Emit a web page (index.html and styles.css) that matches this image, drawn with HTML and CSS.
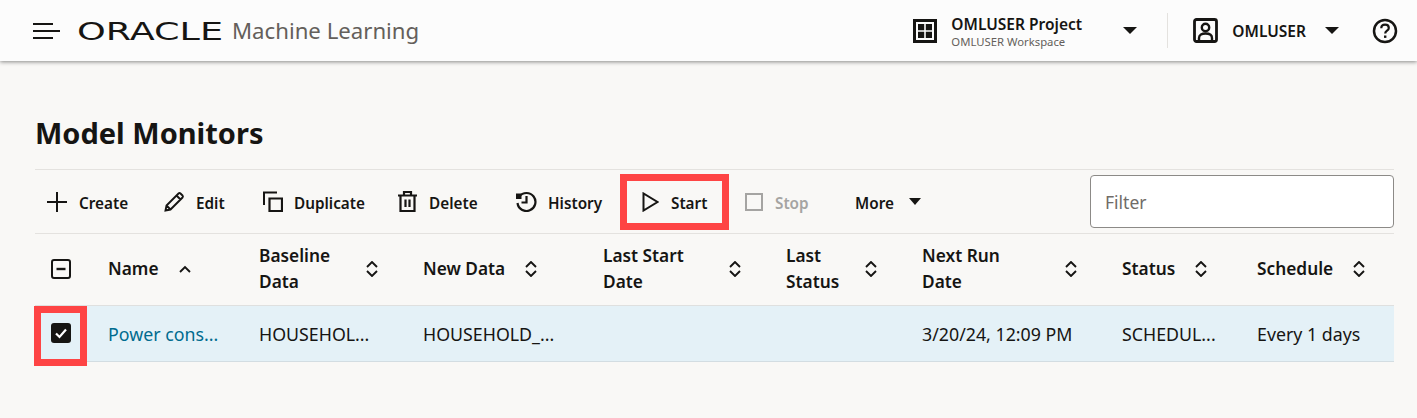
FILE: index.html
```html
<!DOCTYPE html>
<html>
<head>
    <title>Model Monitors</title>
    <link rel="stylesheet" href="styles.css">
</head>
<body>
    <header class="topbar">
        <svg class="ham" width="27" height="18" viewBox="0 0 27 18"><path d="M0 2h20M0 9h27M0 16h20" stroke="#161513" stroke-width="2.200" fill="none"/></svg>
        <svg class="logo" width="146" height="28" viewBox="0 0 146 28"><text x="0" y="22.500" textLength="146" lengthAdjust="spacingAndGlyphs" class="logo-text">ORACLE</text></svg>
        <span class="app-name">Machine Learning</span>
        <div class="spacer"></div>
        <div class="project">
            <svg class="ico" width="24" height="24" viewBox="0 0 24 24"><path d="M1.500 1.500h21v21h-21z" fill="none" stroke="#161513" stroke-width="3"/><path d="M5 5h6.200v6.200H5zM12.800 5H19v6.200h-6.200zM5 12.800h6.200V19H5zM12.800 12.800H19V19h-6.200z" fill="#161513"/></svg>
            <div class="project-text">
                <div class="project-name">OMLUSER Project</div>
                <div class="project-sub">OMLUSER Workspace</div>
            </div>
            <span class="caret caret-big"></span>
        </div>
        <div class="divider"></div>
        <div class="user">
            <svg class="ico" width="25" height="25" viewBox="0 0 25 25"><rect x="1.500" y="1.500" width="22" height="22" rx="2" fill="none" stroke="#161513" stroke-width="2.800"/><circle cx="12.500" cy="9.500" r="3.700" fill="none" stroke="#161513" stroke-width="2.400"/><path d="M6 23v-3c0-3 3-4.500 6.500-4.500s6.500 1.500 6.500 4.500v3" fill="none" stroke="#161513" stroke-width="2.400"/></svg>
            <span class="user-name">OMLUSER</span>
            <span class="caret caret-big"></span>
        </div>
        <svg class="help" width="26" height="26" viewBox="0 0 26 26"><circle cx="13" cy="13" r="11" fill="none" stroke="#161513" stroke-width="2.500"/><path d="M9.300 10.200c0-2.300 1.700-3.500 3.800-3.500 2.200 0 3.700 1.300 3.700 3.200 0 2.900-3.600 2.700-3.600 5.700" fill="none" stroke="#161513" stroke-width="2.200"/><rect x="12" y="17.500" width="2.400" height="2.400" fill="#161513"/></svg>
    </header>

    <main class="content">
        <h1 class="title">Model Monitors</h1>

        <div class="toolbar">
            <div class="btn btn-create">
                <svg width="20" height="20" viewBox="0 0 20 20"><path d="M10 0v20M0 10h20" stroke="#161513" stroke-width="2" fill="none"/></svg>
                <span>Create</span>
            </div>
            <div class="btn btn-edit">
                <svg width="21" height="21" viewBox="0 0 21 21"><path d="M1.500 19.500l1-5L14.500 2.500a1.500 1.500 0 0 1 2 0l2 2a1.500 1.500 0 0 1 0 2L6.500 18.500zM2.500 14.500l4 4M12.500 4.500l4 4" fill="none" stroke="#161513" stroke-width="1.900"/></svg>
                <span>Edit</span>
            </div>
            <div class="btn btn-dup">
                <svg width="21" height="21" viewBox="0 0 21 21"><path d="M2 14V1.500h13" fill="none" stroke="#161513" stroke-width="2"/><path d="M7.500 7.500h12.500v12.500H7.500z" fill="none" stroke="#161513" stroke-width="2.200"/></svg>
                <span>Duplicate</span>
            </div>
            <div class="btn btn-del">
                <svg width="19" height="21" viewBox="0 0 19 21"><path d="M0 4.500h19M6 4.500V1h7v3.500M2.500 4.500V20h14V4.500M7.500 8.500v7.500M11.500 8.500v7.500" fill="none" stroke="#161513" stroke-width="2.200"/></svg>
                <span>Delete</span>
            </div>
            <div class="btn btn-hist">
                <svg width="22" height="21" viewBox="0 0 22 21"><path d="M4.300 5.500A9 9 0 1 1 2.500 12" fill="none" stroke="#161513" stroke-width="2.200"/><path d="M1 2.500L6.500 2.500 6.500 8 1 8z" fill="#161513"/><path d="M11.500 5v6.500h-5" fill="none" stroke="#161513" stroke-width="2.200"/></svg>
                <span>History</span>
            </div>
            <div class="btn btn-start">
                <svg width="17" height="20" viewBox="0 0 17 20"><path d="M1.500 1.500v17L15.500 10z" fill="none" stroke="#161513" stroke-width="2"/></svg>
                <span>Start</span>
            </div>
            <div class="btn btn-stop">
                <svg width="18" height="18" viewBox="0 0 18 18"><rect x="1" y="1" width="16" height="16" fill="none" stroke="#a5a4a2" stroke-width="2"/></svg>
                <span>Stop</span>
            </div>
            <div class="btn btn-more">
                <span>More</span>
                <span class="caret"></span>
            </div>
            <div class="filter">Filter</div>
        </div>

        <table class="grid">
            <colgroup>
                <col class="c1"><col class="c2"><col class="c3"><col class="c4"><col class="c5"><col class="c6"><col class="c7"><col class="c8"><col class="c9">
            </colgroup>
            <thead>
                <tr>
                    <th class="check-cell">
                        <svg class="check-head" width="20" height="20" viewBox="0 0 20 20"><rect x="1" y="1" width="18" height="18" rx="2" fill="none" stroke="#161513" stroke-width="2"/><path d="M5.500 10h9" stroke="#161513" stroke-width="2.400"/></svg>
                    </th>
                    <th><div class="th-in"><span class="th-label">Name</span><svg class="sort-up" width="12" height="8" viewBox="0 0 12 8"><path d="M1 7l5-5 5 5" fill="none" stroke="#161513" stroke-width="1.900"/></svg></div></th>
                    <th><div class="th-in th-wrap"><span class="th-label">Baseline<br>Data</span><svg class="sort" width="12" height="16" viewBox="0 0 12 16"><path d="M1 6l5-5 5 5M1 10l5 5 5-5" fill="none" stroke="#161513" stroke-width="1.900"/></svg></div></th>
                    <th><div class="th-in"><span class="th-label">New Data</span><svg class="sort" width="12" height="16" viewBox="0 0 12 16"><path d="M1 6l5-5 5 5M1 10l5 5 5-5" fill="none" stroke="#161513" stroke-width="1.900"/></svg></div></th>
                    <th><div class="th-in th-wrap"><span class="th-label">Last Start<br>Date</span><svg class="sort" width="12" height="16" viewBox="0 0 12 16"><path d="M1 6l5-5 5 5M1 10l5 5 5-5" fill="none" stroke="#161513" stroke-width="1.900"/></svg></div></th>
                    <th><div class="th-in th-wrap"><span class="th-label">Last<br>Status</span><svg class="sort" width="12" height="16" viewBox="0 0 12 16"><path d="M1 6l5-5 5 5M1 10l5 5 5-5" fill="none" stroke="#161513" stroke-width="1.900"/></svg></div></th>
                    <th><div class="th-in th-wrap"><span class="th-label">Next Run<br>Date</span><svg class="sort" width="12" height="16" viewBox="0 0 12 16"><path d="M1 6l5-5 5 5M1 10l5 5 5-5" fill="none" stroke="#161513" stroke-width="1.900"/></svg></div></th>
                    <th><div class="th-in"><span class="th-label">Status</span><svg class="sort" width="12" height="16" viewBox="0 0 12 16"><path d="M1 6l5-5 5 5M1 10l5 5 5-5" fill="none" stroke="#161513" stroke-width="1.900"/></svg></div></th>
                    <th><div class="th-in"><span class="th-label">Schedule</span><svg class="sort" width="12" height="16" viewBox="0 0 12 16"><path d="M1 6l5-5 5 5M1 10l5 5 5-5" fill="none" stroke="#161513" stroke-width="1.900"/></svg></div></th>
                </tr>
            </thead>
            <tbody>
                <tr class="selected">
                    <td class="check-cell">
                        <svg class="check-row" width="20" height="20" viewBox="0 0 20 20"><rect width="20" height="20" rx="3" fill="#161513"/><path d="M5 10.500l3.500 3.500L15 6.500" fill="none" stroke="#fff" stroke-width="2.200"/></svg>
                        <div class="mark-check"></div>
                    </td>
                    <td><a class="link">Power cons...</a></td>
                    <td>HOUSEHOL...</td>
                    <td>HOUSEHOLD_...</td>
                    <td></td>
                    <td></td>
                    <td>3/20/24, 12:09 PM</td>
                    <td>SCHEDUL...</td>
                    <td>Every 1 days</td>
                </tr>
            </tbody>
        </table>
    </main>
</body>
</html>
```
FILE: styles.css
```css
* {
    box-sizing: border-box;
}

body {
    margin: 0;
    height: 418px;
    overflow: hidden;
    background-color: #f9f8f6;
    color: #161513;
    font-family: "Noto Sans", "Open Sans", sans-serif;
    font-size: 16px;
}

.topbar {
    display: flex;
    align-items: center;
    height: 61px;
    padding-left: 33px;
    background-color: #fcfcfc;
    box-shadow: 0 1px 4px rgba(0, 0, 0, 0.45);
}

.ham {
    margin-right: 17px;
}

.logo {
    margin-right: 9px;
    overflow: visible;
}

.logo-text {
    font-family: "DejaVu Sans", sans-serif;
    font-size: 25px;
    font-weight: 400;
    fill: #161513;
}

.app-name {
    font-size: 22.200px;
    color: #645f5b;
}

.spacer {
    flex: 1;
}

.project {
    display: flex;
    align-items: center;
}

.project-text {
    margin-left: 14px;
    width: 172px;
}

.project-name {
    font-size: 15.500px;
    font-weight: 600;
    line-height: 20px;
    padding-top: 1px;
}

.project-sub {
    font-size: 11.300px;
    line-height: 15px;
    color: #645f5b;
}

.caret {
    display: inline-block;
    width: 0;
    height: 0;
    border-left: 6.500px solid transparent;
    border-right: 6.500px solid transparent;
    border-top: 7px solid #161513;
}

.caret-big {
    border-left-width: 7.500px;
    border-right-width: 7.500px;
}

.divider {
    width: 1px;
    height: 35px;
    margin: 0 25px 0 30px;
    background-color: #e4e2df;
}

.user {
    display: flex;
    align-items: center;
}

.user-name {
    margin-left: 14px;
    margin-right: 19px;
    font-size: 15.500px;
    font-weight: 600;
}

.help {
    margin-left: 33px;
    margin-right: 19px;
}

.content {
    padding: 0 23px 0 35px;
}

.title {
    margin: 0;
    padding-top: 54px;
    height: 108px;
    font-size: 29px;
    line-height: 36px;
    font-weight: 700;
}

.toolbar {
    display: flex;
    align-items: center;
    height: 65px;
    border-top: 1px solid #e4e2df;
    border-bottom: 1px solid #e4e2df;
}

.btn {
    display: flex;
    align-items: center;
    gap: 12px;
    font-size: 15.300px;
    font-weight: 600;
}

.btn span:not(.caret) {
    position: relative;
    top: 1px;
}

.btn-create { margin-left: 12px; width: 117px; }
.btn-edit { width: 98px; gap: 11px; }
.btn-dup { width: 136px; gap: 11px; }
.btn-del { width: 117px; }
.btn-hist { width: 105px; gap: 11px; }

.btn-start {
    width: 109px;
    height: 56px;
    padding-left: 15px;
    border: 7px solid #fe4444;
}

.btn-stop {
    margin-left: 16px;
    width: 110px;
    color: #a5a4a2;
}

.btn-more {
    gap: 15px;
    width: 235px;
}

.filter {
    width: 304px;
    height: 53px;
    padding: 0 14px;
    line-height: 53px;
    background-color: #fff;
    border: 1px solid #8c8a87;
    border-radius: 4px;
    color: #706c68;
    font-size: 17.500px;
}

.grid {
    width: 1359px;
    table-layout: fixed;
    border-collapse: collapse;
}

.c1 { width: 57px; }
.c2 { width: 151px; }
.c3 { width: 164px; }
.c4 { width: 180px; }
.c5 { width: 183px; }
.c6 { width: 136px; }
.c7 { width: 200px; }
.c8 { width: 135px; }
.c9 { width: 153px; }

.grid th {
    height: 71px;
    padding: 0 16px;
    text-align: left;
    font-size: 17.300px;
    font-weight: 600;
    line-height: 26px;
    border-bottom: 1px solid #dfe0df;
}

.grid td {
    height: 56px;
    padding: 2px 0 0 16px;
    font-size: 17.800px;
    white-space: nowrap;
    background-color: #e4f1f7;
    border-bottom: 1px solid #d3dde2;
}

.th-in {
    display: flex;
    align-items: center;
    gap: 20px;
}

.th-wrap {
    justify-content: space-between;
    padding-right: 13px;
}

.link {
    color: #006b8f;
}

.grid .check-cell {
    position: relative;
    padding: 0 0 0 16px;
}

.check-head,
.check-row {
    display: block;
}

.mark-check {
    position: absolute;
    left: -1px;
    top: 0;
    width: 53px;
    height: 60px;
    border: 7px solid #fe4444;
}
```
